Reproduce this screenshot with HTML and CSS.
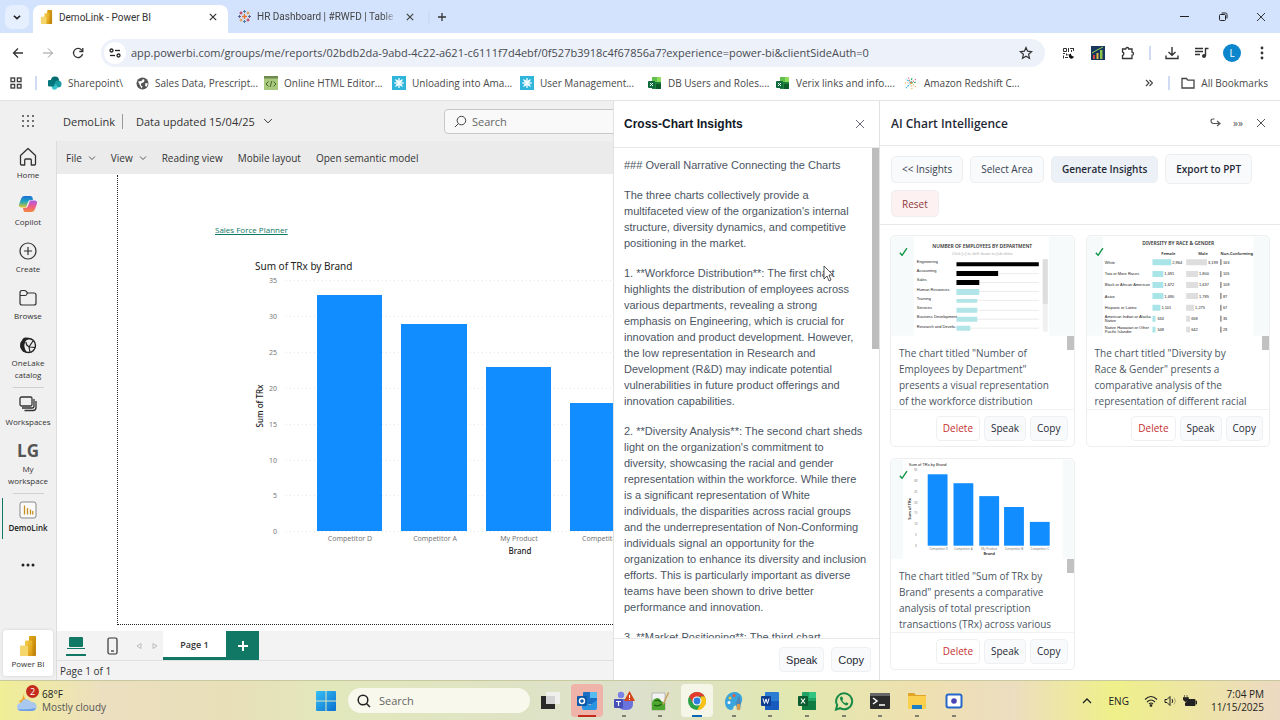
FILE: index.html
```html
<!DOCTYPE html>
<html lang="en">
<head>
    <meta charset="UTF-8">
    <meta name="viewport" content="width=device-width, initial-scale=1.0">
    <title>DemoLink - Power BI</title>
    <link rel="stylesheet" href="styles.css">
</head>
<body>
    <!-- shared symbols -->
    <svg class="defs" width="0" height="0" aria-hidden="true">
        <defs>
            <linearGradient id="gold" x1="0" y1="0" x2="1" y2="1"><stop offset="0" stop-color="#f6cf4d"/><stop offset="1" stop-color="#d9960a"/></linearGradient>
            <linearGradient id="goldDark" x1="0" y1="0" x2="1" y2="1"><stop offset="0" stop-color="#e3a716"/><stop offset="1" stop-color="#b97f0a"/></linearGradient>
            <linearGradient id="copA" x1="0" y1="0" x2="0" y2="1"><stop offset="0" stop-color="#1b6fd8"/><stop offset=".5" stop-color="#22a6b8"/><stop offset="1" stop-color="#e6c72c"/></linearGradient>
            <linearGradient id="copB" x1="0" y1="0" x2="0" y2="1"><stop offset="0" stop-color="#a85be8"/><stop offset=".5" stop-color="#ee5a8c"/><stop offset="1" stop-color="#f58a3a"/></linearGradient>
            <linearGradient id="win" x1="0" y1="0" x2="1" y2="1"><stop offset="0" stop-color="#36c0f5"/><stop offset="1" stop-color="#0a6fd0"/></linearGradient>
            <symbol id="i-close" viewBox="0 0 10 10"><path d="M1 1l8 8M9 1L1 9" fill="none" stroke="currentColor"/></symbol>
            <symbol id="i-down" viewBox="0 0 8 8"><path d="M1 2.500l3 3 3-3" fill="none" stroke="currentColor" stroke-width=".8"/></symbol>
            <symbol id="i-search" viewBox="0 0 14 14"><circle cx="8" cy="6" r="4.6" fill="none" stroke="currentColor"/><path d="M4.6 9.4L1 13" stroke="currentColor"/></symbol>
            <symbol id="i-pbi" viewBox="0 0 16 20"><rect x="9" y="0" width="7" height="20" rx="1" fill="url(#goldDark)"/><path d="M5 5.500q0-1 1-1h5.500q1 0 1 1V20H5z" fill="url(#gold)"/><path d="M0 10.500q0-1 1-1h5.500q1.500 0 1.500 1.500V20H1q-1 0-1-1z" fill="#f5d66b"/></symbol>
            <symbol id="i-snow" viewBox="0 0 14 14"><rect width="14" height="14" fill="#2fb4dc"/><path d="M7 2v10M2 7h10M3.500 3.500l7 7M10.500 3.500l-7 7" stroke="#fff" stroke-width="1.200"/><circle cx="7" cy="7" r="3" fill="none" stroke="#fff" stroke-width=".6"/></symbol>
            <symbol id="i-xl" viewBox="0 0 14 14"><path d="M4 1h8q1 0 1 1v11H4z" fill="#21823c"/><path d="M4 1h5v5H4z" fill="#5fc14b"/><path d="M9 1h4v5H9z" fill="#8fdc5c"/><path d="M8 8h5v5H8z" fill="#0f5c2b"/><rect y="5" width="7" height="7" rx="1" fill="#0f6b3c"/><path d="M2 7l3 3M5 7l-3 3" stroke="#fff"/></symbol>
            <symbol id="i-check" viewBox="0 0 10 10"><path d="M1 6l2.500 3L9 1" fill="none" stroke="#12974a" stroke-width="1.600"/></symbol>
        </defs>
    </svg>

    <header class="tabstrip">
        <button class="tab-list" aria-label="Search tabs"><svg width="10" height="10" viewBox="0 0 8 8"><path d="M1.500 3L4 5.300 6.500 3" fill="none" stroke="#222" stroke-width="1.300"/></svg></button>
        <div class="tab active">
            <svg width="13" height="14"><use href="#i-pbi"/></svg>
            <span class="tab-title">DemoLink - Power BI</span>
            <button class="icon-btn" aria-label="Close tab"><svg width="8" height="8" stroke-width="1.500"><use href="#i-close"/></svg></button>
        </div>
        <div class="tab">
            <svg width="13" height="13" viewBox="0 0 13 13"><path d="M6.500 4v5M4 6.500h5" stroke="#e8762d" stroke-width="1.300"/><path d="M6.500 0v3M5 1.500h3M6.500 10v3M5 11.500h3" stroke="#4e79a7"/><path d="M0 6.500h3M1.500 5v3M10 6.500h3M11.500 5v3" stroke="#5b6591"/><path d="M1.500 3h3M3 1.500v3M8.500 10h3M10 8.500v3" stroke="#c72037"/><path d="M8.500 3h3M10 1.500v3M1.500 10h3M3 8.500v3" stroke="#e0912e"/></svg>
            <span class="tab-title fade">HR Dashboard | #RWFD | Table</span>
            <button class="icon-btn" aria-label="Close tab"><svg width="8" height="8" stroke-width="1.500"><use href="#i-close"/></svg></button>
        </div>
        <span class="sep"></span>
        <button class="icon-btn" aria-label="New tab"><svg width="10" height="10" viewBox="0 0 10 10"><path d="M5 1v8M1 5h8" stroke="#333" stroke-width="1.300"/></svg></button>
        <div class="win-controls">
            <button class="icon-btn" aria-label="Minimize"><svg width="10" height="10"><path d="M0 4.500h9" stroke="#222"/></svg></button>
            <button class="icon-btn" aria-label="Restore"><svg width="10" height="10" fill="none" stroke="#222"><rect x="1.500" y="2.500" width="6" height="6" rx="1"/><path d="M3.500 1h4q1.500 0 1.500 1.500v4"/></svg></button>
            <button class="icon-btn" aria-label="Close"><svg width="10" height="10"><use href="#i-close"/></svg></button>
        </div>
    </header>

    <div class="toolbar">
        <nav class="nav-btns">
            <button class="icon-btn" aria-label="Back"><svg width="12" height="12" viewBox="0 0 12 12"><path d="M11 6H1.500M6 1.500L1.500 6 6 10.500" fill="none" stroke="#333" stroke-width="1.300"/></svg></button>
            <button class="icon-btn" aria-label="Forward"><svg width="12" height="12" viewBox="0 0 12 12"><path d="M1 6h9.500M6 1.500L10.500 6 6 10.500" fill="none" stroke="#999"/></svg></button>
            <button class="icon-btn" aria-label="Reload"><svg width="12" height="12" viewBox="0 0 12 12"><path d="M10 3.500A4.600 4.600 0 1 0 10.600 7M10.800 1v3.500H7.300" fill="none" stroke="#333" stroke-width="1.300"/></svg></button>
        </nav>
        <div class="omnibox">
            <button class="site-info" aria-label="Site information"><svg width="12" height="10" viewBox="0 0 12 10" fill="none" stroke="#222" stroke-width="1.300"><circle cx="2.500" cy="2.500" r="1.500"/><path d="M6 2.500h5"/><circle cx="9.500" cy="7.500" r="1.500"/><path d="M1 7.500h5"/></svg></button>
            <input class="url" type="text" aria-label="Address" value="app.powerbi.com/groups/me/reports/02bdb2da-9abd-4c22-a621-c6111f7d4ebf/0f527b3918c4f67856a7?experience=power-bi&amp;clientSideAuth=0">
            <button class="icon-btn" aria-label="Bookmark this page"><svg width="14" height="14" viewBox="0 0 14 14"><path d="M7 1.500l1.600 3.700 4 .4-3 2.700.9 4L7 10.200l-3.500 2.100.9-4-3-2.700 4-.4z" fill="none" stroke="#333" stroke-width="1.200"/></svg></button>
        </div>
        <div class="extensions">
            <button class="icon-btn" aria-label="QR extension"><svg width="12" height="12" viewBox="0 0 12 12" fill="none" stroke="#333"><path d="M1.500 1.500h3v3h-3zM6.500 1v4M8 1.500h3M9.500 3v2M11.500 1v3M1 6.500h2M4.500 6.500v2M1.500 8.500v3M3 10.500h3M6 7v1.500"/><path d="M9 6.500a2.600 2.600 0 1 0 3 3 2.600 2.600 0 0 1-3-3z" fill="#111" stroke="none"/></svg></button>
            <button class="icon-btn" aria-label="Analytics extension"><svg width="14" height="14" viewBox="0 0 14 14"><rect width="14" height="14" fill="#17375e"/><path d="M2 13V9h2v4z" fill="#d8433a"/><path d="M5.500 13V7h2v6z" fill="#e9b73c"/><path d="M9 13V4h2.500v9z" fill="#8bc34a"/><path d="M1 7l5-3 6-3" stroke="#9fd05a" fill="none"/></svg></button>
            <button class="icon-btn" aria-label="Extensions"><svg width="14" height="14" viewBox="0 0 14 14"><path d="M1.500 3h3.200a1.500 1.500 0 0 1 3 0H11v3.200a1.500 1.500 0 0 1 0 3V12.500H1.500V9.500a1.800 1.800 0 0 0 0-3.500z" fill="none" stroke="#333" stroke-width="1.300"/></svg></button>
            <span class="sep"></span>
            <button class="icon-btn" aria-label="Downloads"><svg width="14" height="14" viewBox="0 0 14 14"><path d="M7 1v8M3.500 6L7 9.300 10.500 6M1 9.500v3h12v-3" fill="none" stroke="#333" stroke-width="1.400"/></svg></button>
            <button class="icon-btn" aria-label="Media"><svg width="14" height="12" viewBox="0 0 14 12"><path d="M0 1.500h8M0 4.500h8M0 7.500h5" stroke="#333" stroke-width="1.400"/><path d="M10.500 9V1.500h3" fill="none" stroke="#333" stroke-width="1.400"/><circle cx="9" cy="9" r="2" fill="#333"/></svg></button>
            <button class="avatar">L</button>
            <button class="icon-btn" aria-label="Menu"><svg width="4" height="14" fill="#333"><circle cx="2" cy="2" r="1.400"/><circle cx="2" cy="7" r="1.400"/><circle cx="2" cy="12" r="1.400"/></svg></button>
        </div>
    </div>

    <nav class="bookmarks">
        <button class="icon-btn" aria-label="Apps"><svg width="12" height="12" fill="none" stroke="#444" stroke-width="1.400"><rect x="1" y="1" width="3.600" height="3.600"/><rect x="7.400" y="1" width="3.600" height="3.600"/><rect x="1" y="7.400" width="3.600" height="3.600"/><rect x="7.400" y="7.400" width="3.600" height="3.600"/></svg></button>
        <span class="sep"></span>
        <a class="bookmark short" href="#"><svg width="14" height="14" viewBox="0 0 14 14"><circle cx="7" cy="4.500" r="4" fill="#036c70"/><circle cx="10" cy="8" r="3.500" fill="#1a9ba1"/><circle cx="6.500" cy="11" r="2.700" fill="#37c6d0"/><rect y="4" width="6.500" height="6.500" rx="1" fill="#03787c"/></svg>Sharepoint\</a>
        <a class="bookmark" href="#"><svg width="13" height="13" viewBox="0 0 13 13"><circle cx="6.500" cy="6.500" r="6" fill="#555"/><path d="M2 4.500l3.500-.5 1.500-2 1.500 1-.5 2-3 1.500v2l1.500 1-1 2zM9.500 6l2.500.5-1.500 3.500-1.500-1.500z" fill="#fff"/></svg>Sales Data, Prescript...</a>
        <a class="bookmark" href="#"><svg width="14" height="14" viewBox="0 0 14 14"><rect width="14" height="14" fill="#a9c97e"/><rect width="14" height="2.500" fill="#6e8a4c"/><path d="M4.500 5.500L2 8l2.500 2.500M9.500 5.500L12 8l-2.500 2.500M7.800 5L6.200 11" fill="none" stroke="#4a6630"/></svg>Online HTML Editor...</a>
        <a class="bookmark" href="#"><svg width="14" height="14"><use href="#i-snow"/></svg>Unloading into Ama...</a>
        <a class="bookmark" href="#"><svg width="14" height="14"><use href="#i-snow"/></svg>User Management...</a>
        <a class="bookmark" href="#"><svg width="14" height="14"><use href="#i-xl"/></svg>DB Users and Roles....</a>
        <a class="bookmark" href="#"><svg width="14" height="14"><use href="#i-xl"/></svg>Verix links and info....</a>
        <a class="bookmark" href="#"><svg width="14" height="14" viewBox="0 0 14 14" fill="none" stroke-width="1.200"><path d="M7 7L2 3M7 7l-5 5" stroke="#3fb6e0" stroke-dasharray="2 1"/><path d="M7 7l1-6M7 7l6-1" stroke="#3dbb78" stroke-dasharray="2 1"/><path d="M7 7L4 1M7 7l5-4" stroke="#e0506c" stroke-dasharray="1 1.500"/><path d="M7 7l1 6M7 7l5 4M7 7H1" stroke="#e9a83a" stroke-dasharray="1 1.500"/></svg>Amazon Redshift C...</a>
        <div class="bookmark-end">
            <button class="icon-btn" aria-label="More bookmarks"><svg width="8" height="8" fill="none" stroke="#444" stroke-width="1.200"><path d="M1 1l3 3-3 3M4.500 1l3 3-3 3"/></svg></button>
            <span class="sep"></span>
            <a class="bookmark all" href="#"><svg width="14" height="12" viewBox="0 0 14 12"><path d="M1 1.500h4.500l1.300 1.700H13V11H1z" fill="none" stroke="#444" stroke-width="1.300"/></svg>All Bookmarks</a>
        </div>
    </nav>

    <main class="page">
        <section class="powerbi">
            <header class="pbi-head">
                <button class="launcher" aria-label="App launcher"><svg width="14" height="14" fill="#444"><circle cx="2" cy="2" r="1"/><circle cx="7" cy="2" r="1"/><circle cx="12" cy="2" r="1"/><circle cx="2" cy="7" r="1"/><circle cx="7" cy="7" r="1"/><circle cx="12" cy="7" r="1"/><circle cx="2" cy="12" r="1"/><circle cx="7" cy="12" r="1"/><circle cx="12" cy="12" r="1"/></svg></button>
                <span class="report-name">DemoLink</span>
                <button class="updated">Data updated 15/04/25 <svg width="10" height="10"><use href="#i-down"/></svg></button>
                <label class="pbi-search"><svg width="13" height="13"><use href="#i-search"/></svg><input type="search" placeholder="Search" aria-label="Search"></label>
            </header>

            <nav class="rail">
                <a class="rail-item" href="#"><svg width="20" height="20" viewBox="0 0 20 20"><path d="M2.500 8.500L10 1.500l7.500 7V17q0 1-1 1h-3.200v-5q0-1-1-1H7.700q-1 0-1 1v5H3.500q-1 0-1-1z" fill="none" stroke="#333" stroke-width="1.300" stroke-linejoin="round"/></svg>Home</a>
                <a class="rail-item" href="#"><svg width="20" height="20" viewBox="0 0 20 20"><path d="M6.500 2h6q1.500 0 2 1.500L15 6h-2.500q-1.800 0-2.400 1.700L8 13.500H3.500Q.5 13.500 1 10.500L3 5q1-3 3.500-3z" fill="url(#copA)"/><path d="M13.500 18h-6q-1.500 0-2-1.500L5 14h2.500q1.800 0 2.400-1.700L12 6.500h4.500q3 0 2.500 3L17 15q-1 3-3.500 3z" fill="url(#copB)"/></svg>Copilot</a>
                <a class="rail-item" href="#"><svg width="20" height="20" viewBox="0 0 20 20" fill="none" stroke="#333" stroke-width="1.200"><circle cx="10" cy="10" r="8"/><path d="M10 6v8M6 10h8"/></svg>Create</a>
                <a class="rail-item" href="#"><svg width="20" height="20" viewBox="0 0 20 20" fill="none" stroke="#333" stroke-width="1.200"><path d="M2 5q0-2.500 2-2.500h2.500q1 0 1.500.7L9.500 5H16q2 0 2 2v8q0 2-2 2H4q-2 0-2-2z"/><path d="M2 7.500h5q1 0 1.500-.8L9.500 5"/></svg>Browse</a>
                <a class="rail-item" href="#"><svg width="20" height="20" viewBox="0 0 20 20"><circle cx="10.500" cy="10.500" r="7" fill="#eee" stroke="#222" stroke-width="1.400"/><path d="M3 14Q.5 9 4 5.500q1-3.500 4.500-3 3 0 4 1.500-4.500 0-5.500 3.500Q5 12 9 17.500 5 18 3 14z" fill="#222"/><path d="M8 7q0 4 4 5l5 .5M11 12l4-6M11 12l1 5" stroke="#222" fill="none" stroke-width="1.200"/></svg>OneLake<br>catalog</a>
                <hr>
                <a class="rail-item" href="#"><svg width="20" height="20" viewBox="0 0 20 20" fill="none" stroke="#333" stroke-width="1.300"><rect x="2" y="3" width="12" height="9" rx="1.500"/><path d="M4 14h10q2 0 2-2V5M6.500 16.500H15q3 0 3-3V7"/></svg>Workspaces</a>
                <a class="rail-item" href="#"><b class="initials">LG</b>My<br>workspace</a>
                <hr>
                <a class="rail-item current" href="#"><svg width="20" height="20" viewBox="0 0 20 20"><rect x="2" y="2" width="16" height="16" rx="2" fill="#fafafa" stroke="#888"/><path d="M6.500 5.500v9M9.500 8v6.500M12.500 9.500v5M14.700 11v3.500" stroke="#c8901c" stroke-width="1.300"/></svg>DemoLink</a>
                <button class="more" aria-label="More"><svg width="14" height="4" fill="#222"><circle cx="2" cy="2" r="1.500"/><circle cx="7" cy="2" r="1.500"/><circle cx="12" cy="2" r="1.500"/></svg></button>
                <a class="product" href="#"><svg width="16" height="20"><use href="#i-pbi"/></svg>Power BI</a>
            </nav>

            <div class="report">
                <div class="ribbon">
                    <button>File <svg width="8" height="8"><use href="#i-down"/></svg></button>
                    <button>View <svg width="8" height="8"><use href="#i-down"/></svg></button>
                    <button>Reading view</button>
                    <button>Mobile layout</button>
                    <button>Open semantic model</button>
                </div>
                <div class="canvas">
                    <div class="sheet">
                        <a class="planner" href="#">Sales Force Planner</a>
                        <svg class="chart" width="420" height="300" viewBox="0 0 420 300">
                            <text x="5" y="12" class="c-title">Sum of TRx by Brand</text>
                            <g class="c-grid"><path d="M36 22.500h384M36 58.500h384M36 94.500h384M36 130.500h384M36 166.500h384M36 202.500h384M36 237.500h384M36 273.500h384"/></g>
                            <g class="c-tick c-end"><text x="27" y="25">35</text><text x="27" y="61">30</text><text x="27" y="97">25</text><text x="27" y="133">20</text><text x="27" y="169">15</text><text x="27" y="205">10</text><text x="27" y="240">5</text><text x="27" y="276">0</text></g>
                            <g class="c-bar"><rect x="67" y="37" width="65" height="236"/><rect x="151" y="66" width="66" height="207"/><rect x="236" y="109" width="65" height="164"/><rect x="320" y="145" width="66" height="128"/></g>
                            <g class="c-tick c-mid"><text x="100" y="283">Competitor D</text><text x="185" y="283">Competitor A</text><text x="269" y="283">My Product</text><text x="354" y="283">Competitor B</text></g>
                            <text x="270" y="296" class="c-axis">Brand</text>
                            <text transform="translate(13 148) rotate(-90)" class="c-axis">Sum of TRx</text>
                        </svg>
                    </div>
                </div>
                <div class="pages">
                    <button class="view on" aria-label="Web layout"><svg width="20" height="20" viewBox="0 0 20 20" fill="#117865"><rect x="3" y="1" width="14" height="10" rx="1"/><path d="M1 12h18v1H1zM0 18h20v2H0z"/></svg></button>
                    <button class="view" aria-label="Mobile layout"><svg width="11" height="18" fill="none" stroke="#333" stroke-width="1.200"><rect x="1" y="1" width="9" height="16" rx="1.500"/><path d="M4 14h3"/></svg></button>
                    <button class="step" aria-label="Previous page"><svg width="6" height="8" fill="none" stroke="#bbb"><path d="M5 1.500v5L1 4z"/></svg></button>
                    <button class="step" aria-label="Next page"><svg width="6" height="8" fill="none" stroke="#bbb"><path d="M1 1.500v5L5 4z"/></svg></button>
                    <button class="page-tab">Page 1</button>
                    <button class="page-add" aria-label="New page"><svg width="10" height="10"><path d="M5 0v10M0 5h10" stroke="#fff" stroke-width="2"/></svg></button>
                </div>
                <footer class="status">Page 1 of 1</footer>
            </div>
        </section>

        <section class="cross">
            <header class="cross-head">
                <h2>Cross-Chart Insights</h2>
                <button class="icon-btn" aria-label="Close"><svg width="10" height="10"><use href="#i-close"/></svg></button>
            </header>
            <div class="cross-body">
                <div class="narrative">
                    <p>### Overall Narrative Connecting the Charts</p>
                    <p>The three charts collectively provide a<br>multifaceted view of the organization's internal<br>structure, diversity dynamics, and competitive<br>positioning in the market.</p>
                    <p>1. **Workforce Distribution**: The first chart<br>highlights the distribution of employees across<br>various departments, revealing a strong<br>emphasis on Engineering, which is crucial for<br>innovation and product development. However,<br>the low representation in Research and<br>Development (R&amp;D) may indicate potential<br>vulnerabilities in future product offerings and<br>innovation capabilities.</p>
                    <p>2. **Diversity Analysis**: The second chart sheds<br>light on the organization's commitment to<br>diversity, showcasing the racial and gender<br>representation within the workforce. While there<br>is a significant representation of White<br>individuals, the disparities across racial groups<br>and the underrepresentation of Non-Conforming<br>individuals signal an opportunity for the<br>organization to enhance its diversity and inclusion<br>efforts. This is particularly important as diverse<br>teams have been shown to drive better<br>performance and innovation.</p>
                    <p>3. **Market Positioning**: The third chart</p>
                </div>
                <div class="scrollbar"></div>
            </div>
            <footer class="cross-foot">
                <button class="btn">Speak</button>
                <button class="btn">Copy</button>
            </footer>
            <svg class="cursor" width="11" height="17" viewBox="0 0 11 17"><path d="M1 1v13l3-3 2 5 2-1-2-5h4z" fill="#fff" stroke="#333" stroke-width=".8"/></svg>
        </section>

        <aside class="ai">
            <header class="ai-head">
                <h2>AI Chart Intelligence</h2>
                <button class="icon-btn" aria-label="Undock"><svg width="11" height="10" viewBox="0 0 11 10"><path d="M4.500 1H3Q1 1 1 3t2 2.500h6.500M7 3l3 2.500L7 8" fill="none" stroke="#555" stroke-width="1.200"/></svg></button>
                <button class="icon-btn arrows" aria-label="Collapse">»»</button>
                <button class="icon-btn" aria-label="Close"><svg width="10" height="10"><use href="#i-close"/></svg></button>
            </header>
            <div class="ai-actions">
                <button class="pill">&lt;&lt; Insights</button>
                <button class="pill">Select Area</button>
                <button class="pill primary">Generate Insights</button>
                <button class="pill export">Export to PPT</button>
                <button class="pill reset">Reset</button>
            </div>
            <div class="cards">
                <article class="card">
                    <svg class="thumb" viewBox="0 0 184 100">
                        <rect width="184" height="100" fill="#f7fafa"/><rect x="23" width="136" height="100" fill="#fff"/>
                        <text x="92" y="12" class="t-title">NUMBER OF EMPLOYEES BY DEPARTMENT</text>
                        <text x="92" y="19" class="t-sub">Click [+] to drill down to Job titles</text>
                        <path d="M66 37.500h83M66 46.500h83M66 55.500h83M66 64.500h83M66 74.500h83M66 83.500h83M66 92.500h83" stroke="#ddd" stroke-width=".6"/>
                        <g class="t-text"><text x="26" y="27">Engineering</text><text x="26" y="36">Accounting</text><text x="26" y="45">Sales</text><text x="26" y="55">Human Resources</text><text x="26" y="64">Training</text><text x="26" y="73">Services</text><text x="26" y="82">Business Development</text><text x="26" y="92">Research and Develo..</text></g>
                        <path d="M66 26h83v4H66zM66 35h42v5H66zM66 44h23v5H66z"/>
                        <path d="M66 53h23v6H66zM66 63h21v4H66zM66 72h21v5H66zM66 81h21v5H66zM66 90h14v5H66z" fill="#b2e5e8"/>
                        <rect x="153" y="23" width="5" height="73" fill="#f0f0f0"/><rect x="153" y="23" width="5" height="45" fill="#ddd"/>
                        <use href="#i-check" x="8" y="11" width="9" height="9"/>
                    </svg>
                    <div class="card-text"><p>The chart titled "Number of Employees by Department" presents a visual representation of the workforce distribution</p><div class="scrollbar"></div></div>
                    <div class="card-foot"><button class="btn delete">Delete</button><button class="btn">Speak</button><button class="btn">Copy</button></div>
                </article>
                <article class="card">
                    <svg class="thumb" viewBox="0 0 184 100">
                        <rect width="184" height="100" fill="#f7fafa"/><rect x="16" width="152" height="100" fill="#fff"/>
                        <text x="92" y="9" class="t-title">DIVERSITY BY RACE &amp; GENDER</text>
                        <g class="t-head"><text x="82" y="19">Female</text><text x="117" y="19">Male</text><text x="151" y="19">Non-Conforming</text></g>
                        <g class="t-text"><text x="18" y="28">White</text><text x="18" y="39">Two or More Races</text><text x="18" y="50">Black or African American</text><text x="18" y="62">Asian</text><text x="18" y="73">Hispanic or Latino</text><text x="18" y="82">American Indian or Alaska</text><text x="18" y="86">Native</text><text x="18" y="93">Native Hawaiian or Other</text><text x="18" y="97">Pacific Islander</text></g>
                        <path d="M66 23h19v6H66zM66 35h11v6H66zM66 46h11v6H66zM66 57h11v6H66zM66 69h8v6h-8zM66 80h3v6h-3zM66 91h3v6h-3z" fill="#a9e4e8"/>
                        <path d="M100 23h21v6h-21zM100 35h12v6h-12zM100 46h12v6h-12zM100 57h12v6h-12zM100 69h8v6h-8zM100 80h4v6h-4zM100 91h4v6h-4z" fill="#dedede"/>
                        <path d="M135 23v6M135 35v6M135 46v6M135 57v6M135 69v6M135 80v6M135 91v6" stroke="#555"/>
                        <g class="t-text"><text x="86" y="28">2,964</text><text x="78" y="39">1,691</text><text x="78" y="50">1,672</text><text x="78" y="62">1,690</text><text x="75" y="73">1,101</text><text x="71" y="84">634</text><text x="71" y="95">548</text><text x="122" y="28">3,199</text><text x="113" y="39">1,800</text><text x="113" y="50">1,637</text><text x="113" y="62">1,785</text><text x="109" y="73">1,275</text><text x="105" y="84">658</text><text x="105" y="95">642</text><text x="137" y="28">163</text><text x="137" y="39">105</text><text x="137" y="50">109</text><text x="137" y="62">87</text><text x="137" y="73">67</text><text x="137" y="84">35</text><text x="137" y="95">29</text></g>
                        <use href="#i-check" x="8" y="11" width="9" height="9"/>
                    </svg>
                    <div class="card-text"><p>The chart titled "Diversity by<br>Race &amp; Gender" presents a comparative analysis of the representation of different racial</p><div class="scrollbar"></div></div>
                    <div class="card-foot"><button class="btn delete">Delete</button><button class="btn">Speak</button><button class="btn">Copy</button></div>
                </article>
                <article class="card">
                    <svg class="thumb" viewBox="0 0 184 100">
                        <rect width="184" height="100" fill="#f7fafa"/><rect x="12" width="161" height="100" fill="#fff"/>
                        <g class="t-text"><text x="18" y="7">Sum of TRx by Brand</text></g>
                        <g class="t-faint"><text x="25" y="12">35</text><text x="25" y="23">30</text><text x="25" y="34">25</text><text x="25" y="45">20</text><text x="25" y="55">15</text><text x="25" y="66">10</text><text x="25" y="77">5</text><text x="25" y="88">0</text><text x="48" y="91">Competitor D</text><text x="73" y="91">Competitor A</text><text x="99" y="91">My Product</text><text x="124" y="91">Competitor B</text><text x="150" y="91">Competitor C</text></g>
                        <g class="t-head"><text x="99" y="96">Brand</text><text transform="translate(20 50) rotate(-90)">Sum of TRx</text></g>
                        <g class="c-bar"><rect x="37" y="15" width="20" height="72"/><rect x="63" y="24" width="20" height="63"/><rect x="89" y="37" width="20" height="50"/><rect x="114" y="48" width="20" height="39"/><rect x="140" y="63" width="20" height="24"/></g>
                        <use href="#i-check" x="8" y="11" width="9" height="9"/>
                    </svg>
                    <div class="card-text"><p>The chart titled "Sum of TRx by Brand" presents a comparative analysis of total prescription transactions (TRx) across various</p><div class="scrollbar"></div></div>
                    <div class="card-foot"><button class="btn delete">Delete</button><button class="btn">Speak</button><button class="btn">Copy</button></div>
                </article>
            </div>
        </aside>
    </main>

    <footer class="taskbar">
        <button class="weather">
            <span class="weather-icon">
                <svg width="22" height="22" viewBox="0 0 22 22"><path d="M8 3q-1 8 8 9a8 8 0 0 1-13-1q4-1 5-8z" fill="#f0a52c"/><path d="M5 21a4 4 0 0 1 0-8 5.500 5.500 0 0 1 10-1 4.500 4.500 0 0 1 2 9z" fill="#a9c8f0"/><path d="M5 21a4 4 0 0 1-3-2q8 1 18-1-1 3-4 3z" fill="#6fa0e8"/></svg>
                <span class="badge">2</span>
            </span>
            <span class="weather-text">68°F<br><small>Mostly cloudy</small></span>
        </button>
        <div class="task-center">
            <button class="start" aria-label="Start"><svg width="20" height="20" viewBox="0 0 20 20" fill="url(#win)"><path d="M0 1q0-1 1-1h8.500v9.500H0zM10.500 0H19q1 0 1 1v8.500h-9.500zM0 10.500h9.500V20H1q-1 0-1-1zM10.500 10.500H20V19q0 1-1 1h-8.500z"/></svg></button>
            <label class="task-search"><svg width="14" height="14" viewBox="0 0 14 14" fill="none" stroke="#222" stroke-width="1.500"><circle cx="6" cy="6" r="4.800"/><path d="M9.500 9.500L13 13"/></svg><input type="search" placeholder="Search" aria-label="Taskbar search"></label>
            <div class="apps">
                <button class="app" aria-label="Task view"><svg width="20" height="20" viewBox="0 0 20 20"><rect x="1" y="5" width="14" height="13" fill="#2a2a2a"/><rect x="6" y="1" width="14" height="12" fill="#f2f2f2" opacity=".85"/></svg></button>
                <button class="app alert" aria-label="Outlook"><svg width="20" height="20" viewBox="0 0 20 20"><rect x="6" y="1" width="14" height="12" rx="1" fill="#1a6fc4"/><path d="M13 1h6q1 0 1 1v5h-7z" fill="#55bbf0"/><path d="M5 9l8 5 7-5v8q0 2-2 2H7q-2 0-2-2z" fill="#2a94e0"/><rect y="5" width="10" height="10" rx="1" fill="#0f5aa8"/><circle cx="5" cy="10" r="2.500" fill="none" stroke="#fff" stroke-width="1.400"/></svg></button>
                <button class="app run" aria-label="Teams"><svg width="22" height="20" viewBox="0 0 22 20"><circle cx="8" cy="4" r="3.200" fill="#7b83eb"/><path d="M5 8h13q2 0 2 2v3q0 6-7 6-8 0-8-6z" fill="#6a72dc"/><rect x="1" y="8" width="9" height="9" rx="1" fill="#464eb8"/><path d="M3 10.500h5M5.500 10.500V15" stroke="#fff" stroke-width="1.200"/><path d="M16.500 0l5.500 10H11z" fill="#d3461b"/><path d="M16.500 4v3M16.500 8v1" stroke="#fff"/></svg></button>
                <button class="app run" aria-label="Notepad++"><svg width="18" height="20" viewBox="0 0 18 20"><path d="M1 2h13v17H1z" fill="#f2f2f2" stroke="#999" stroke-width=".6"/><path d="M1 19v-4q-1-7 5-8 3 0 4 3l4 2v7z" fill="#4ea72e"/><path d="M4 10q3-2 6 1M3 14q4 2 8-1" stroke="#1f5f14" fill="none" stroke-width="1.300"/><path d="M17 1l-5 11-1 2 2-1L18 2z" fill="#c99a58"/></svg></button>
                <button class="app run focus" aria-label="Chrome"><svg width="18" height="18" viewBox="0 0 18 18"><circle cx="9" cy="9" r="9" fill="#2ca24c"/><path d="M9 0a9 9 0 0 1 7.800 4.500H9L5 11 1.200 4.500A9 9 0 0 1 9 0z" fill="#e33b2e"/><path d="M16.800 4.500A9 9 0 0 1 9 18l4-7V4.500z" fill="#fbc116"/><circle cx="9" cy="9" r="4.500" fill="#fff"/><circle cx="9" cy="9" r="3.400" fill="#2f7de1"/></svg></button>
                <button class="app run" aria-label="Paint"><svg width="20" height="20" viewBox="0 0 20 20"><path d="M12 1C5 0 1 6 1 11s3 8 6 8 2-3 3-4 7 0 8-5-2-8-6-9z" fill="#3aa5dc"/><circle cx="6" cy="7" r="1.500" fill="#f2c230"/><circle cx="10" cy="4.500" r="1.500" fill="#e85a3c"/><circle cx="5" cy="11.500" r="1.500" fill="#fff"/><path d="M15 4l2 8-1 7h-3l-1-7z" fill="#4d88b8"/><path d="M13 13h3v6h-3z" fill="#d59a4c"/></svg></button>
                <button class="app run" aria-label="Word"><svg width="18" height="20" viewBox="0 0 18 20"><rect x="4" y="1" width="14" height="18" rx="1" fill="#2b7cd3"/><path d="M4 10h14v8q0 1-1 1H5q-1 0-1-1z" fill="#185abd"/><rect y="5" width="10" height="10" rx="1" fill="#103f91"/><path d="M2 7.500l1.500 5L5 8l1.500 4.500L8 7.500" fill="none" stroke="#fff"/></svg></button>
                <button class="app run" aria-label="Excel"><svg width="18" height="20" viewBox="0 0 18 20"><rect x="4" y="1" width="14" height="18" rx="1" fill="#21a366"/><path d="M11 1h6q1 0 1 1v5h-7z" fill="#33c481"/><path d="M4 10h14v8q0 1-1 1H5q-1 0-1-1z" fill="#107c41"/><rect y="5" width="10" height="10" rx="1" fill="#0b5c30"/><path d="M3 7.500l4 5M7 7.500l-4 5" stroke="#fff" stroke-width="1.200"/></svg></button>
                <button class="app run" aria-label="WhatsApp"><svg width="20" height="20" viewBox="0 0 20 20"><path d="M2 18.500l1.200-4.300a8 8 0 1 1 3 3z" fill="none" stroke="#178a45" stroke-width="2"/><path d="M7 5.500q-2 1.500 0 4.500t5 4.500q2 0 2.500-2l-2.300-1.200-1 1q-2-.8-3-3l1-1L8.300 5.700z" fill="#178a45"/></svg></button>
                <button class="app run" aria-label="Terminal"><svg width="20" height="18" viewBox="0 0 20 18"><rect y="1" width="20" height="16" rx="1" fill="#2b2b2b"/><rect y="1" width="20" height="3" fill="#666"/><path d="M3 6l4 3-4 3M9 13h6" fill="none" stroke="#fff" stroke-width="1.500"/></svg></button>
                <button class="app run" aria-label="File Explorer"><svg width="20" height="18" viewBox="0 0 20 18"><path d="M1 2q0-1 1-1h5l2 2h9q1 0 1 1v4H1z" fill="#e0a325"/><rect x="1" y="4" width="18" height="13" rx="1" fill="#fbd04e"/><path d="M5 13h10v4H5z" fill="#1c7fc4"/></svg></button>
                <button class="app run" aria-label="Recorder"><svg width="18" height="18" viewBox="0 0 18 18"><rect x="1.500" y="2.500" width="15" height="13" rx="2" fill="#fff" stroke="#2566c8" stroke-width="2"/><circle cx="9" cy="9" r="2.800" fill="#4b46b8"/></svg></button>
            </div>
        </div>
        <div class="tray">
            <button class="icon-btn" aria-label="Hidden icons"><svg width="10" height="10"><path d="M1 7l4-4 4 4" fill="none" stroke="#222" stroke-width="1.300"/></svg></button>
            <span class="lang">ENG</span>
            <button class="tray-icons" aria-label="Network, volume and battery">
                <svg width="14" height="12" viewBox="0 0 14 12" fill="none" stroke="#222" stroke-width="1.100"><path d="M1 4.500q6-6 12 0M3 7q4-4 8 0M5 9q2-2 4 0"/><circle cx="7" cy="10.500" r=".8" fill="#222"/></svg>
                <svg width="13" height="12" viewBox="0 0 13 12" fill="none" stroke="#222"><path d="M1 4.500h2l3-3v9l-3-3H1z"/><path d="M8 4q1.500 2 0 4"/><path d="M10 2.500q3 3.500 0 7" opacity=".3"/></svg>
                <svg width="14" height="12" viewBox="0 0 14 12"><path d="M5 4.500h7v6H2.500V8" fill="#222" stroke="#222"/><path d="M13 6h1v3h-1zM1.500 0v2.500M4 0v2.500M0 2.500h5.500v2L2.700 7 0 4.500z" stroke="#222" stroke-width=".6" fill="#222"/></svg>
            </button>
            <time class="clock">7:04 PM<br>11/15/2025</time>
        </div>
    </footer>
</body>
</html>
```
FILE: styles.css
```css
*{box-sizing: border-box;}
body{margin: 0; height: 100vh; display: flex; flex-direction: column; overflow: hidden;
font-family: "Open Sans", "Noto Sans", sans-serif; font-size: 10px; color: #333; background-color: #fff;}
button, input{font: inherit; color: inherit; border: 0; background: none; padding: 0; margin: 0;}
button{white-space: nowrap;}
svg{display: block; flex: none;}
a{color: inherit; text-decoration: none;}
h2{margin: 0;}
.defs{position: absolute;}
.icon-btn{display: flex; align-items: center; justify-content: center; width: 20px; height: 20px;}
.sep{width: 2px; height: 14px; background-color: #cfdcf3;}

/* browser tabs */
.tabstrip{display: flex; align-items: center; height: 33px; padding: 0 9px 0 5px; background-color: #d3e3fd;}
.tab-list{display: flex; align-items: center; justify-content: center; width: 24px; height: 24px; border-radius: 7px; background-color: #e6effd;}
.tab{display: flex; align-items: center; gap: 6px; width: 198px; height: 28px; padding: 0 9px 0 10px; color: #444;}
.tab.active{align-self: flex-end; width: 195px; margin-left: 4px; padding: 0 8px 4px 7px; border-radius: 8px 8px 0 0; background-color: #fff; color: #333;}
.tab .icon-btn{width: 14px;}
.tab-title{flex: 1; overflow: hidden; white-space: nowrap; font-family: Roboto, "Open Sans", sans-serif;}
.fade{mask-image: linear-gradient(to right, #000 90%, transparent);}
.tabstrip .sep{margin: 0 2px;}
.win-controls{display: flex; gap: 18px; margin-left: auto;}

/* address bar */
.toolbar{display: flex; align-items: center; height: 39px; padding: 0 8px;}
.nav-btns{display: flex; gap: 10px;}
.omnibox{display: flex; align-items: center; flex: 1; height: 28px; margin: 0 13px; padding: 0 9px 0 3px; border-radius: 14px; background-color: #edf1fa;}
.site-info{display: flex; align-items: center; justify-content: center; width: 22px; height: 22px; border-radius: 11px; background-color: #fff;}
.url{flex: 1; min-width: 0; margin-left: 5px; font-size: 11px; color: #484b50; outline: 0;}
.extensions{display: flex; align-items: center; gap: 10px;}
.extensions .sep{margin: 0 1px;}
.avatar{width: 18px; height: 18px; margin: 0 1px; border-radius: 9px; background-color: #0b86cc; color: #fff;}

/* bookmarks */
.bookmarks{display: flex; align-items: center; height: 28px; padding: 0 12px 6px 6px; color: #484848;}
.bookmarks .sep{margin: 0 11px 0 9px;}
.bookmark{display: flex; align-items: center; gap: 6px; width: 128px; white-space: nowrap;}
.bookmark.short{width: 88px;}
.bookmark.all{width: auto;}
.bookmark-end{display: flex; align-items: center; margin-left: auto;}

.page{display: flex; flex: 1; min-height: 0;}

/* power bi */
.powerbi{display: grid; flex: 1; min-width: 0; overflow: hidden; grid-template: 40px 1fr / 57px 1fr; background-color: #f0f0f0; border-top: 1px solid #e4e4e4;}
.pbi-head{grid-column: 1 / 3; display: flex; align-items: center; font-size: 11px;}
.launcher{display: flex; justify-content: center; width: 56px;}
.report-name{margin-left: 7px; padding-right: 7px; border-right: 1px solid #999;}
.updated{display: flex; align-items: center; gap: 8px; margin-left: 13px;}
.pbi-search{display: flex; align-items: center; gap: 5px; flex: none; width: 300px; height: 25px; margin-left: auto; margin-right: -131px; padding-left: 9px; border: 1px solid #c8c8c8; border-radius: 4px; background-color: #f9f9f9;}
.pbi-search input{outline: 0;}
.rail{display: flex; flex-direction: column; border-right: 1px solid #ddd;}
.rail-item{display: block; position: relative; padding: 6px 0 7px; text-align: center; font-size: 8px; line-height: 12px;}
.rail-item svg{margin: 0 auto 2px;}
.rail hr{width: 31px; height: 1px; margin: -1px auto 0; border: 0; background-color: #d0d0d0;}
.initials{display: block; margin-bottom: 2px; font-size: 17px; line-height: 20px; color: #555;}
.rail-item.current{font-weight: 600; color: #222;}
.rail-item.current::before{content: ""; position: absolute; left: 2px; top: 4px; bottom: 2px; width: 1px; background-color: #117865;}
.more{display: flex; align-items: center; justify-content: center; height: 47px;}
.product{display: flex; flex-direction: column; align-items: center; justify-content: center; gap: 2px; height: 46px; margin: auto 3px 4px; border-radius: 3px; background-color: #fff; box-shadow: 0 0 3px #ccc; font-size: 8px; line-height: 12px;}
.report{display: flex; flex-direction: column; min-width: 0; overflow: hidden;}
.ribbon{display: flex; align-items: center; gap: 15px; height: 33px; padding-left: 9px; background-color: #ebebeb;}
.ribbon button{display: flex; align-items: center; gap: 6px;}
.canvas{display: flex; flex: 1; min-height: 0; background-color: #fff;}
.sheet{flex: 1; min-width: 0; overflow: hidden; margin: 1px 0 6px 60px; padding: 48px 0 0 97px; border: 0 dotted #222; border-width: 0 0 1px 1px;}
.planner{display: block; font-size: 8px; line-height: 14px; color: #117865; text-decoration: underline;}
.chart{margin: 21px 0 0 35px; font-family: "Noto Sans", sans-serif;}
.c-title{font-size: 10px; fill: #222;}
.c-grid{fill: none; stroke: #e6e6e6; stroke-dasharray: 1 3;}
.c-tick{font-size: 7px; fill: #777;}
.c-end{text-anchor: end;}
.c-mid{text-anchor: middle;}
.c-axis{font-size: 8px; font-weight: 500; fill: #222; text-anchor: middle;}
.c-bar{fill: #118dff;}
.pages{display: flex; height: 29px; background-color: #f3f3f3;}
.view{display: flex; align-items: center; justify-content: center; width: 37px;}
.step{display: flex; align-items: center; justify-content: center; width: 16px;}
.page-tab{width: 63px; border-bottom: 3px solid #117865; background-color: #fff; font-weight: 600; font-size: 9px;}
.page-add{display: flex; align-items: center; justify-content: center; width: 33px; background-color: #117865;}
.status{height: 20px; padding-left: 3px; border-top: 1px solid #e0e0e0; background-color: #f3f3f3; line-height: 20px;}

/* cross-chart insights */
.cross{position: relative; display: flex; flex-direction: column; width: 267px; border-left: 1px solid #e2e2e2; border-right: 1px solid #e2e2e2; border-top: 1px solid #e4e4e4; font-family: "Liberation Sans", Arial, sans-serif;}
.cross-head{display: flex; align-items: center; justify-content: space-between; height: 47px; padding: 0 9px 0 10px; border-bottom: 1px solid #e8e8e8; color: #667;}
.cross-head h2{font-size: 12px; color: #111827;}
.cross-body{display: flex; flex: 1; min-height: 0; overflow: hidden;}
.narrative{flex: 1; padding: 9px 2px 0 10px; font-size: 11px; line-height: 16px; color: #4b5563;}
.narrative p{margin: 0 0 14px;}
.cross-body .scrollbar{width: 7px; height: 201px; background-color: #bdbdbd;}
.cross-foot{display: flex; align-items: center; justify-content: flex-end; gap: 7px; height: 42px; padding-right: 8px; border-top: 1px solid #e8e8e8;}
.cross-foot .btn{font-size: 11px;}
.cursor{position: absolute; left: 209px; top: 164px;}
.btn{height: 25px; padding: 0 6px; border: 1px solid #eef0f2; border-radius: 4px; background-color: #f9fafb; color: #1f2937;}

/* ai panel */
.ai{width: 400px; border-top: 1px solid #e4e4e4;}
.ai-head{display: flex; align-items: center; gap: 3px; height: 45px; padding: 0 9px 0 11px; border-bottom: 1px solid #e8e8e8; color: #555;}
.ai-head h2{margin-right: auto; font-size: 12px; font-weight: 600; color: #1f2937;}
.ai-actions{display: flex; flex-wrap: wrap; align-items: center; gap: 6px 7px; padding: 8px 11px 7px; border-bottom: 1px solid #e8e8e8;}
.pill{height: 27px; padding: 0 10px; border: 1px solid #eceef0; border-radius: 5px; background-color: #f9fafb; color: #374151;}
.pill.primary{background-color: #ebf1f6; font-weight: 600; color: #1f2937;}
.pill.export{height: 30px; font-weight: 600; color: #1f2937;}
.pill.reset{background-color: #fef1f1; color: #8d3a3a;}
.cards{display: grid; grid-template-columns: 1fr 1fr; gap: 11px; padding: 10px 10px 0;}
.card{border: 1px solid #eceef0; border-radius: 5px; overflow: hidden; min-width: 0;}
.thumb{width: 100%; height: 100px; font-family: "Noto Sans", sans-serif;}
.t-title{font-size: 5px; font-weight: 600; text-anchor: middle; fill: #333;}
.t-sub{font-size: 4px; text-anchor: middle; fill: #aaa;}
.t-head{font-size: 4px; font-weight: 600; text-anchor: middle; fill: #222;}
.t-text{font-family: "Liberation Sans", sans-serif; font-size: 4px; fill: #222;}
.t-faint{font-size: 3px; text-anchor: middle; fill: #777;}
.card-text{display: flex; height: 73px; overflow: hidden;}
.card-text p{flex: 1; margin: 9px 0 0; padding: 0 8px; line-height: 16px; color: #4b5563;}
.card-text .scrollbar{width: 7px; height: 14px; background-color: #c1c1c1;}
.card-foot{display: flex; align-items: center; justify-content: flex-end; gap: 4px; height: 37px; padding-right: 6px; border-top: 1px solid #f1f2f4;}
.btn.delete{background-color: #fff; color: #c53030;}

/* taskbar */
.taskbar{display: grid; grid-template-columns: 1fr auto 1fr; align-items: center; height: 40px; padding: 0 8px 0 16px; border-top: 1px solid #c9c99f; color: #222;
background-image: linear-gradient(to right, #f0ee96, #ecdfc0 8%, #e8dfb8 18%, #e2e8bc 26%, #dde0cb 50%, #e2e8b0 62%, #efe0b0 72%, #ecddc0 79%, #eff08a 87%, #ecd9c2);}
.weather{display: flex; align-items: center; gap: 4px; text-align: left; line-height: 13px;}
.weather-icon{position: relative;}
.badge{position: absolute; left: 10px; top: -5px; width: 13px; height: 13px; border-radius: 7px; background-color: #c42b1c; color: #fff; text-align: center; line-height: 13px; font-size: 9px;}
.weather small{font-size: 10px; color: #555;}
.task-center{display: flex; align-items: center;}
.start{width: 20px; margin-right: 12px;}
.task-search{display: flex; align-items: center; gap: 8px; width: 182px; height: 25px; margin-right: 2px; padding-left: 9px; border-radius: 13px; background-color: #f8f8ec; font-size: 11px;}
.task-search input{width: 140px; outline: 0;}
.apps{display: grid; grid-template-columns: repeat(12, 1fr); width: 440px;}
.app{position: relative; display: flex; align-items: center; justify-content: center; height: 33px; border-radius: 4px;}
.app.run::after{content: ""; position: absolute; left: 50%; bottom: 0; width: 4px; height: 2px; margin-left: -2px; background-color: #808070;}
.app.focus, .app.alert{margin: 0 2px;}
.app.focus{background-color: #f6f6e8;}
.app.alert{background-color: #efb3a9;}
.app.focus::after{width: 10px; margin-left: -5px; background-color: #0a67b8;}
.app.alert::after{content: ""; position: absolute; left: 7px; right: 7px; bottom: 0; height: 2px; background-color: #c42b1c;}
.tray{display: flex; align-items: center; justify-content: flex-end; padding-right: 8px;}
.lang{margin: 0 15px 0 12px;}
.tray-icons{display: flex; gap: 6px; margin-right: 14px;}
.clock{text-align: right; line-height: 13px;}
input::placeholder{color: #666; opacity: 1;}
```
